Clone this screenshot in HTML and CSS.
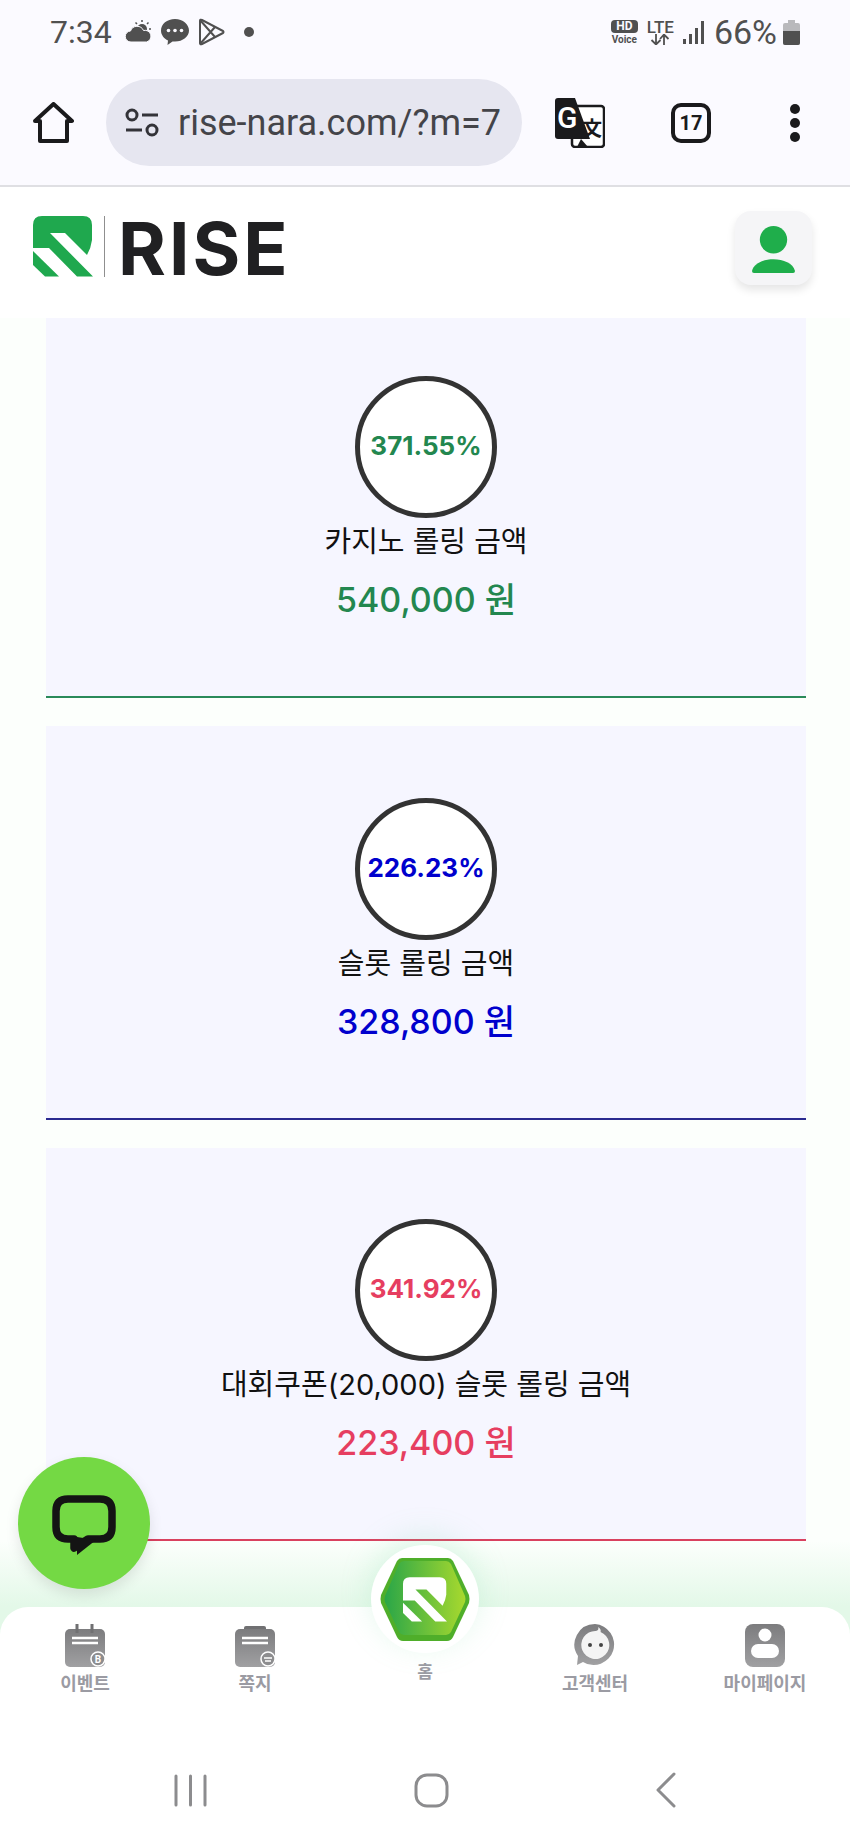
FILE: index.html
```html
<!DOCTYPE html>
<html lang="ko">
<head>
    <meta charset="UTF-8">
    <meta name="viewport" content="width=device-width, initial-scale=1.0">
    <title>RISE</title>
    <link rel="stylesheet" href="styles.css">
</head>
<body>
    <svg class="defs" width="0" height="0">
        <defs>
            <symbol id="r-mark" viewBox="0 0 60 61">
                <path d="M9 0H50Q59 0 59 9V24Q58 32 54 39L32 17H17L60 60.500H44L16 32H0V9Q0 0 9 0Z"/>
                <path d="M0 35L26 60.500H12L0 49Z"/>
            </symbol>
            <linearGradient id="hex-fill" x1="0" y1="0" x2="1" y2="0">
                <stop offset="0" stop-color="#2aa648"/>
                <stop offset="1" stop-color="#a8d92e"/>
            </linearGradient>
            <linearGradient id="gray-fill" x1="0" y1="0" x2="0" y2="1">
                <stop offset="0" stop-color="#7c7c7e"/>
                <stop offset="1" stop-color="#a0a0a2"/>
            </linearGradient>
        </defs>
    </svg>

    <!-- phone status bar -->
    <div class="status-bar">
        <div class="status-left">
            <span class="status-time">7:34</span>
            <svg class="status-icon" width="28" height="26" viewBox="0 0 28 26">
                <circle cx="18" cy="10" r="5" fill="#505050"/>
                <path d="M18 1v2M24.500 3.500l-1.500 1.500M27 10h-2M11.500 3.500l1.500 1.500" stroke="#505050" stroke-width="1.500"/>
                <path d="M7 23a5.500 5.500 0 0 1-.5-11 7 7 0 0 1 13-.5 5.800 5.800 0 0 1 3 11.500z" fill="#505050" stroke="#fbfaff"/>
            </svg>
            <svg class="status-icon" width="30" height="28" viewBox="0 0 30 28">
                <path d="M15 1C7 1 1 6 1 12.500c0 4.500 3 8 7 10l-.5 4.500 5-3.500h2.500c8 0 14-5 14-11S23 1 15 1z" fill="#505050"/>
                <circle cx="8.500" cy="12.500" r="1.800" fill="#fbfaff"/>
                <circle cx="15" cy="12.500" r="1.800" fill="#fbfaff"/>
                <circle cx="21.500" cy="12.500" r="1.800" fill="#fbfaff"/>
            </svg>
            <svg class="status-icon" width="27" height="28" viewBox="0 0 27 28" fill="none" stroke="#505050" stroke-width="2" stroke-linejoin="round">
                <path d="M2 3Q2 1 4 2L25 13Q26 14 25 15L4 26Q2 27 2 25Z"/>
                <path d="M2 2L17 19M2 26L17 9"/>
            </svg>
            <span class="status-dot"></span>
        </div>
        <div class="status-right">
            <div class="hd-voice">
                <span class="hd-badge">HD</span>
                <span class="hd-text">Voice</span>
            </div>
            <div class="lte">
                <span class="lte-text">LTE</span>
                <svg width="20" height="11" viewBox="0 0 20 11" fill="none" stroke="#505050" stroke-width="1.800">
                    <path d="M6 0V10M1.500 6L6 10.500L10.500 6"/>
                    <path d="M14 11V1M10 5L14 .5L18.500 5"/>
                </svg>
            </div>
            <svg width="22" height="24" viewBox="0 0 22 24" fill="#505050">
                <rect x="0" y="19" width="3" height="5"/>
                <rect x="6" y="14" width="3" height="10"/>
                <rect x="12" y="8" width="3" height="16"/>
                <rect x="18" y="1" width="3" height="23"/>
            </svg>
            <span class="status-battery">66%</span>
            <svg width="17" height="25" viewBox="0 0 17 25">
                <path d="M5 0h7v3h3q2 0 2 2v18q0 2-2 2H2q-2 0-2-2V5q0-2 2-2h3z" fill="#b9b9bc"/>
                <path d="M0 11H17V23q0 2-2 2H2q-2 0-2-2z" fill="#505050"/>
            </svg>
        </div>
    </div>

    <!-- browser toolbar -->
    <div class="browser-bar">
        <svg class="home-icon" width="41" height="41" viewBox="0 0 41 41" fill="none" stroke="#1a1a1c" stroke-width="4" stroke-linejoin="round">
            <path d="M2 19L20.500 2L39 19H34V39H7V19Z"/>
        </svg>
        <div class="url-pill">
            <svg class="tune-icon" width="34" height="29" viewBox="0 0 34 29" fill="none" stroke="#333338" stroke-width="3">
                <circle cx="7" cy="7" r="5"/>
                <path d="M17 7H33M1 22H17"/>
                <circle cx="27" cy="22" r="5"/>
            </svg>
            <span class="url-text">rise-nara.com/?m=7</span>
        </div>
        <svg class="translate-icon" width="50" height="50" viewBox="0 0 50 50">
            <rect x="17" y="8" width="32" height="41" rx="3" fill="#fff" stroke="#1a1a1c" stroke-width="2.500"/>
            <path d="M3 0H20L35 41H3Q0 41 0 38V3Q0 0 3 0Z" fill="#1a1a1c"/>
            <path d="M26 41L33 49H22Z" fill="#1a1a1c"/>
            <text x="2" y="30" class="translate-g">G</text>
            <text x="27" y="38" class="translate-han">文</text>
        </svg>
        <div class="tab-count">17</div>
        <div class="more-dots">
            <span></span>
            <span></span>
            <span></span>
        </div>
    </div>

    <!-- site header -->
    <header class="site-header">
        <div class="logo">
            <svg class="logo-mark" width="60" height="61"><use href="#r-mark"/></svg>
            <span class="logo-line"></span>
            <span class="logo-text">RISE</span>
        </div>
        <div class="profile-btn">
            <svg width="44" height="48" viewBox="0 0 44 48" fill="#1fae4b">
                <circle cx="22" cy="14" r="14"/>
                <path d="M0 46C2 38 12 34 22 34S42 38 44 46Q44 48 42 48H2Q0 48 0 46Z"/>
            </svg>
        </div>
    </header>

    <main class="content">
        <div class="card-list">
            <section class="card card-green">
                <div class="ring">371.55%</div>
                <div class="card-label">카지노 롤링 금액</div>
                <div class="card-value">540,000 원</div>
            </section>
            <section class="card card-blue">
                <div class="ring">226.23%</div>
                <div class="card-label">슬롯 롤링 금액</div>
                <div class="card-value">328,800 원</div>
            </section>
            <section class="card card-red">
                <div class="ring">341.92%</div>
                <div class="card-label">대회쿠폰(20,000) 슬롯 롤링 금액</div>
                <div class="card-value">223,400 원</div>
            </section>
        </div>
    </main>

    <!-- floating chat -->
    <div class="chat-btn">
        <svg width="64" height="64" viewBox="0 0 64 64" fill="none">
            <path d="M16 4H48Q60 4 60 16V32Q60 44 48 44H36L22 53V44H16Q4 44 4 32V16Q4 4 16 4Z" stroke="#141414" stroke-width="7.500" stroke-linejoin="round"/>
            <path d="M25 42V60L44 45Z" fill="#141414"/>
        </svg>
    </div>

    <!-- bottom tabs -->
    <div class="dock">
        <div class="dock-glow"></div>
        <nav class="tabs">
            <div class="tab">
                <svg width="42" height="43" viewBox="0 0 42 43">
                    <rect x="1" y="5" width="40" height="38" rx="5" fill="url(#gray-fill)"/>
                    <path d="M13 0V9M28 0V9" stroke="#707072" stroke-width="3"/>
                    <path d="M8 14H34M8 19H34" stroke="#fff" stroke-width="2.500"/>
                    <circle cx="34" cy="35" r="7" fill="#8d8d8f" stroke="#fff" stroke-width="1.500"/>
                    <text x="34" y="38.500" class="badge-text">B</text>
                </svg>
                <span>이벤트</span>
            </div>
            <div class="tab">
                <svg width="42" height="43" viewBox="0 0 42 43">
                    <rect x="10" y="2" width="22" height="6" rx="2" fill="#707072"/>
                    <rect x="1" y="5" width="40" height="38" rx="5" fill="url(#gray-fill)"/>
                    <path d="M8 14H34M8 19H34" stroke="#fff" stroke-width="2.500"/>
                    <circle cx="34" cy="35" r="7" fill="#8d8d8f" stroke="#fff" stroke-width="1.500"/>
                    <path d="M30 34H38M31 37H37" stroke="#fff" stroke-width="1.500"/>
                </svg>
                <span>쪽지</span>
            </div>
            <div class="tab tab-home">
                <div class="home-badge">
                    <svg width="90" height="85" viewBox="0 0 90 85">
                        <path d="M22 1H68Q71 1 73 4L89 38Q90 42 89 46L73 80Q71 84 67 84H23Q19 84 17 80L1 46Q0 42 1 38L17 4Q19 1 22 1Z" fill="#4fae2a"/>
                        <path d="M24 4H66Q69 4 71 7L85 39Q86 42 85 45L71 75Q69 78 66 78H24Q21 78 19 75L5 45Q4 42 5 39L19 7Q21 4 24 4Z" fill="url(#hex-fill)"/>
                        <svg x="23" y="20" width="44" height="45" class="home-mark"><use href="#r-mark"/></svg>
                    </svg>
                </div>
                <span>홈</span>
            </div>
            <div class="tab">
                <svg width="42" height="43" viewBox="0 0 42 43">
                    <path d="M21 0A20.500 20.500 0 1 1 9 38L3 41 4 32A20.500 20.500 0 0 1 21 0Z" fill="url(#gray-fill)"/>
                    <path d="M21.500 7C24 7 25 5 24 3C27 5 27 7 26.500 8A14 14 0 1 1 21.500 7Z" fill="#f4f4f4"/>
                    <circle cx="16" cy="21" r="2" fill="#444"/>
                    <circle cx="27" cy="21" r="2" fill="#444"/>
                </svg>
                <span>고객센터</span>
            </div>
            <div class="tab">
                <svg width="42" height="43" viewBox="0 0 42 43">
                    <rect x="1" y="0" width="40" height="43" rx="8" fill="url(#gray-fill)"/>
                    <circle cx="21" cy="11" r="6.500" fill="#fff"/>
                    <rect x="7" y="20" width="28" height="14" rx="7" fill="#fff"/>
                </svg>
                <span>마이페이지</span>
            </div>
        </nav>
        <div class="android-nav">
            <svg width="33" height="33" viewBox="0 0 33 33" stroke="#8c8c8e" stroke-width="3" stroke-linecap="round">
                <path d="M2 2V31M16.500 2V31M31 2V31"/>
            </svg>
            <svg width="35" height="35" viewBox="0 0 35 35" fill="none" stroke="#8c8c8e" stroke-width="3">
                <rect x="2" y="2" width="31" height="31" rx="11"/>
            </svg>
            <svg width="20" height="36" viewBox="0 0 20 36" fill="none" stroke="#8c8c8e" stroke-width="3" stroke-linecap="round" stroke-linejoin="round">
                <path d="M18 2L2 18L18 34"/>
            </svg>
        </div>
    </div>
</body>
</html>
```
FILE: styles.css
```css
* {
    box-sizing: border-box;
}

html, body {
    margin: 0;
    padding: 0;
}

body {
    position: relative;
    width: 850px;
    height: 1842px;
    overflow: hidden;
    display: flex;
    flex-direction: column;
    background-color: #fff;
    font-family: 'Inter', 'Noto Sans CJK KR', sans-serif;
}

.defs {
    position: absolute;
}

.status-bar {
    display: flex;
    align-items: center;
    justify-content: space-between;
    height: 60px;
    padding: 4px 50px 0 50px;
    background-color: #fbfaff;
    color: #505050;
}

.status-left,
.status-right {
    display: flex;
    align-items: center;
}

.status-time {
    font-family: 'Roboto', sans-serif;
    font-size: 32px;
    margin-right: 12px;
}

.status-icon {
    margin-right: 8px;
}

.status-dot {
    width: 10px;
    height: 10px;
    margin-left: 11px;
    border-radius: 50%;
    background-color: #505050;
}

.status-right {
    gap: 9px;
}

.hd-voice {
    display: flex;
    flex-direction: column;
    align-items: center;
    font-family: 'Roboto', sans-serif;
    font-weight: 700;
    line-height: 1;
}

.hd-badge {
    width: 27px;
    height: 13px;
    border-radius: 4px;
    background-color: #505050;
    color: #fbfaff;
    font-size: 12px;
    text-align: center;
    line-height: 13px;
}

.hd-text {
    margin-top: 2px;
    font-size: 10px;
}

.lte {
    display: flex;
    flex-direction: column;
    align-items: center;
}

.lte-text {
    font-family: 'Roboto', sans-serif;
    font-size: 17px;
    font-weight: 500;
    line-height: 14px;
}

.status-battery {
    font-family: 'Roboto', sans-serif;
    font-size: 34px;
    margin-right: -3px;
}

.browser-bar {
    display: flex;
    align-items: center;
    height: 127px;
    padding-left: 33px;
    background-color: #fbfaff;
    border-bottom: 2px solid #dfdfe3;
}

.url-pill {
    display: flex;
    align-items: center;
    width: 416px;
    height: 87px;
    margin-left: 32px;
    padding-left: 19px;
    border-radius: 44px;
    background-color: #e6e6f0;
}

.tune-icon {
    flex-shrink: 0;
}

.url-text {
    margin-left: 19px;
    font-family: 'Roboto', sans-serif;
    font-size: 36px;
    color: #444449;
    white-space: nowrap;
}

.translate-icon {
    margin-left: 33px;
}

.translate-g {
    font-family: 'Roboto', sans-serif;
    font-size: 30px;
    font-weight: 500;
    fill: #fff;
}

.translate-han {
    font-family: 'Noto Sans CJK SC', sans-serif;
    font-size: 20px;
    font-weight: 700;
    fill: #1a1a1c;
}

.tab-count {
    width: 40px;
    height: 40px;
    margin-left: 66px;
    border: 4px solid #1a1a1c;
    border-radius: 10px;
    font-family: 'Roboto', sans-serif;
    font-size: 20px;
    font-weight: 700;
    line-height: 32px;
    text-align: center;
    color: #1a1a1c;
}

.more-dots {
    display: flex;
    flex-direction: column;
    gap: 4px;
    margin-left: 79px;
}

.more-dots span {
    width: 10px;
    height: 10px;
    border-radius: 50%;
    background-color: #1a1a1c;
}

.site-header {
    position: relative;
    z-index: 2;
    display: flex;
    align-items: flex-start;
    justify-content: space-between;
    height: 131px;
    padding: 29px 38px 0 33px;
    background-color: #fff;
}

.logo {
    display: flex;
    align-items: center;
    height: 61px;
}

.logo-mark {
    fill: #1fa84e;
}

.logo-line {
    width: 1px;
    height: 61px;
    margin-left: 11px;
    background-color: #8f8f8f;
}

.logo-text {
    margin-left: 13px;
    margin-top: 4px;
    font-size: 73px;
    font-weight: 700;
    line-height: 61px;
    letter-spacing: 3px;
    color: #202022;
}

.profile-btn {
    display: flex;
    align-items: center;
    justify-content: center;
    width: 77px;
    height: 74px;
    margin-top: -5px;
    padding-top: 2px;
    border-radius: 16px;
    background-color: #f5f5f7;
    box-shadow: 0 5px 8px rgba(0, 0, 0, 0.1);
}

.profile-btn svg {
    width: 43px;
    height: 47px;
}

.content {
    flex: 1;
    padding: 0 44px 0 46px;
    background-color: #fcfffc;
    overflow: hidden;
}

.card-list {
    display: flex;
    flex-direction: column;
    gap: 28px;
    margin-top: -13.5px;
}

.card {
    display: flex;
    flex-direction: column;
    align-items: center;
    height: 393.5px;
    padding-top: 71.5px;
    background-color: #f6f6ff;
    border-bottom: 2px solid;
}

.ring {
    display: flex;
    align-items: center;
    justify-content: center;
    flex-shrink: 0;
    width: 142px;
    height: 142px;
    padding-bottom: 3px;
    border: 5px solid #333;
    border-radius: 50%;
    background-color: #fff;
    font-size: 26px;
    font-weight: 700;
}

.card-label {
    margin-top: 4px;
    font-size: 29px;
    line-height: 40px;
    color: #111;
}

.card-value {
    margin-top: 16px;
    font-size: 34px;
    font-weight: 450;
    line-height: 44px;
}

.card-green {
    border-color: #2a8a5a;
}

.card-green .ring,
.card-green .card-value {
    color: #23874f;
}

.card-blue {
    border-color: #2a2a90;
}

.card-blue .ring,
.card-blue .card-value {
    color: #0000cd;
}

.card-red {
    border-color: #d9415f;
}

.card-red .ring,
.card-red .card-value {
    color: #e63e60;
}

.chat-btn {
    position: absolute;
    z-index: 5;
    left: 18px;
    top: 1457px;
    display: flex;
    align-items: center;
    justify-content: center;
    width: 132px;
    height: 132px;
    padding-top: 8px;
    border-radius: 50%;
    background-color: #74d944;
    box-shadow: 0 6px 14px rgba(0, 0, 0, 0.1);
}

.dock {
    position: absolute;
    z-index: 4;
    left: 0;
    right: 0;
    bottom: 0;
}

.dock-glow {
    height: 94px;
    margin-bottom: -28px;
    background: linear-gradient(to bottom, rgba(230, 248, 234, 0), #e3f8e8 70%);
}

.tabs {
    position: relative;
    display: grid;
    grid-template-columns: repeat(5, 170px);
    height: 93px;
    padding-top: 17px;
    border-radius: 28px 28px 0 0;
    background-color: #fff;
}

.tab {
    display: flex;
    flex-direction: column;
    align-items: center;
    font-size: 18px;
    font-weight: 700;
    color: #9b9ba3;
}

.tab span {
    line-height: 26px;
    margin-top: 4px;
}

.tab-home {
    position: relative;
    padding-top: 31px;
}

.tab-home span {
    font-size: 17px;
}

.home-badge {
    position: absolute;
    top: -79px;
    left: 31px;
    display: flex;
    align-items: center;
    justify-content: center;
    width: 108px;
    height: 108px;
    border-radius: 50%;
    background-color: #fff;
    box-shadow: 0 -8px 30px rgba(130, 225, 170, 0.25);
}

.home-mark {
    fill: #fff;
}

.android-nav {
    display: flex;
    align-items: center;
    justify-content: space-between;
    height: 142px;
    padding: 38px 174px 0 174px;
    background-color: #fff;
}

.badge-text {
    font-family: 'Roboto', sans-serif;
    font-size: 10px;
    font-weight: 700;
    text-anchor: middle;
    fill: #fff;
}
```
